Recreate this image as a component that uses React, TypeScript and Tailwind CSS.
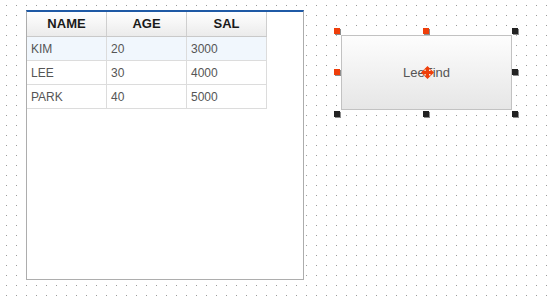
import React from "react";

const rows = [
  { name: "KIM", age: "20", sal: "3000" },
  { name: "LEE", age: "30", sal: "4000" },
  { name: "PARK", age: "40", sal: "5000" },
];

function Handle({ pos, orange }: { pos: string; orange?: boolean }) {
  return (
    <div
      className={
        "absolute w-[6px] h-[6px] shadow-[1px_1px_0_#8c8c8c] " +
        (orange ? "bg-[#ef3e0a] " : "bg-[#222222] ") +
        pos
      }
    />
  );
}

export default function App() {
  return (
    <div
      className="w-[547px] h-[303px] bg-white bg-[radial-gradient(circle_at_0.5px_0.5px,#9c9c9c_0.6px,transparent_0.7px)] bg-size-[10px_10px] bg-position-[6px_5px] flex items-start pl-[26px] pt-[10px]"
      style={{ fontFamily: '"Liberation Sans", Arial, sans-serif' }}
    >
      {/* Grid panel */}
      <div className="w-[278px] h-[270px] bg-white border-x border-b border-[#adadad] border-t-2 border-t-[#1f5aa6] flex flex-col">
        <div className="w-[240px] flex flex-col">
          <div className="flex h-[25px] bg-[linear-gradient(#ffffff,#ebebeb)] border-b border-[#c9c9c9]">
            {["NAME", "AGE", "SAL"].map((h) => (
              <div
                key={h}
                className="w-[80px] border-r border-[#cfcfcf] flex items-center justify-center text-[13px] font-bold text-[#1a1a1a]"
              >
                {h}
              </div>
            ))}
          </div>
          {rows.map((r, i) => (
            <div
              key={r.name}
              className={
                "flex h-[24px] border-b border-[#dcdcdc] " +
                (i === 0 ? "bg-[#f1f7fd]" : "bg-white")
              }
            >
              {[r.name, r.age, r.sal].map((c, j) => (
                <div
                  key={j}
                  className="w-[80px] border-r border-[#dcdcdc] flex items-center pl-[4px] text-[12px] text-[#555555]"
                >
                  {c}
                </div>
              ))}
            </div>
          ))}
        </div>
      </div>

      {/* Selected button */}
      <div className="relative ml-[37px] mt-[25px]">
        <div className="w-[171px] h-[75px] border border-[#c2c2c2] bg-[linear-gradient(#fdfdfd,#e6e6e6)] flex items-center justify-center text-[13px] text-[#555555]">
          LeeFind
        </div>
        <svg
          className="absolute left-[80px] top-[31px]"
          width="13"
          height="13"
          viewBox="0 0 13 13"
        >
          <path
            d="M6.5 0 L10 3.5 L8 3.5 L8 5 L9.5 5 L9.5 3 L13 6.5 L9.5 10 L9.5 8 L8 8 L8 9.5 L10 9.5 L6.5 13 L3 9.5 L5 9.5 L5 8 L3.5 8 L3.5 10 L0 6.5 L3.5 3 L3.5 5 L5 5 L5 3.5 L3 3.5 Z"
            fill="#ef3e0a"
          />
        </svg>
        <Handle pos="left-[-7px] top-[-7px]" orange />
        <Handle pos="left-[82px] top-[-7px]" orange />
        <Handle pos="left-[171px] top-[-7px]" />
        <Handle pos="left-[-7px] top-[34px]" orange />
        <Handle pos="left-[171px] top-[34px]" />
        <Handle pos="left-[-7px] top-[76px]" />
        <Handle pos="left-[82px] top-[76px]" />
        <Handle pos="left-[171px] top-[76px]" />
      </div>
    </div>
  );
}
